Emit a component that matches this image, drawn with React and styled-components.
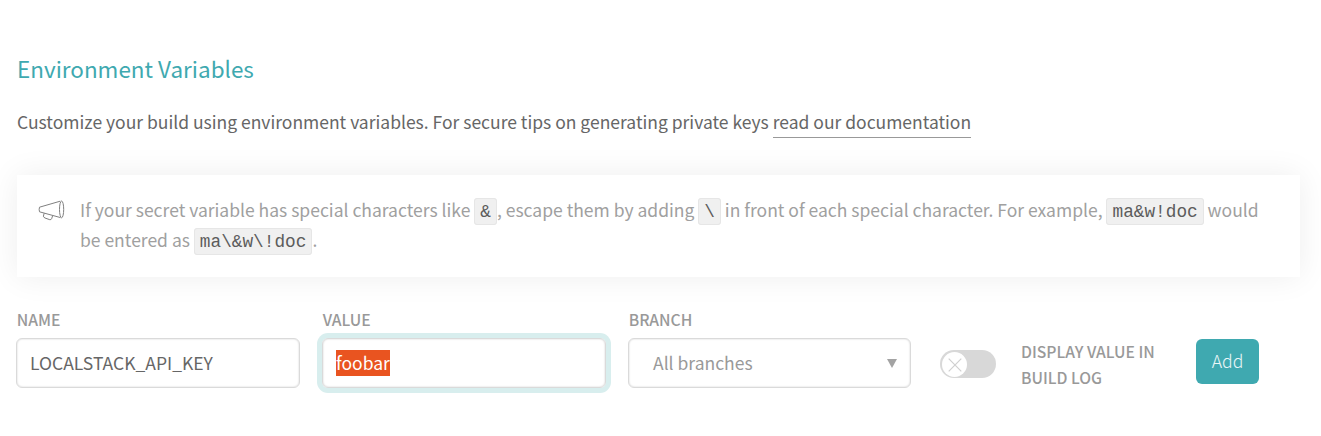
import React from "react";
import styled, { createGlobalStyle, css } from "styled-components";

const GlobalStyle = createGlobalStyle`
  * { box-sizing: border-box; }
  body {
    margin: 0;
    background: #fff;
    color: #666;
    font-family: "Noto Sans CJK SC", "Noto Sans", sans-serif;
    overflow: hidden;
  }
`;

const Section = styled.section`
  width: 1321px;
  height: 436px;
  padding: 48px 21px 0 17px;
`;

const Title = styled.h2`
  margin: 0;
  color: #3fa9b0;
  font-size: 22.48px;
  font-weight: 400;
  line-height: 40px;
`;

const Intro = styled.p`
  margin: 19px 0 0;
  font-size: 17.49px;
  line-height: 30px;
  white-space: nowrap;
`;

const DocLink = styled.a`
  display: inline-block;
  height: 31px;
  border-bottom: 1px solid #999;
  color: inherit;
  text-decoration: none;
`;

const Notice = styled.div`
  display: flex;
  width: 1283px;
  height: 102px;
  margin-top: 37px;
  padding: 20px 0 0 21px;
  background: #fff;
  box-shadow: 0 0 30px rgba(0, 0, 0, 0.07);
`;

const NoticeIcon = styled.svg`
  flex: none;
  width: 28px;
  height: 24px;
  margin-top: 4px;
  fill: none;
  stroke: #808080;
  stroke-width: 1;
  stroke-linejoin: round;
`;

const NoticeText = styled.p`
  margin: 0 0 0 14px;
  color: #a0a0a0;
  font-size: 17.51px;
  line-height: 30px;
  white-space: nowrap;
`;

const Code = styled.code`
  padding: 3px 5px 2px;
  border: 1px solid #e6e6e6;
  border-radius: 3px;
  background: #f0f0f0;
  color: #5c5c5c;
  font: 17.75px/20px "Liberation Mono", monospace;
`;

const Form = styled.form`
  display: flex;
  align-items: flex-start;
  margin: 30px 0 0 -1px;
`;

const Field = styled.div`
  width: 284px;
  margin-right: 22px;
`;

const labelText = css`
  color: #999;
  font-size: 15.7px;
  font-weight: 500;
  line-height: 26px;
`;

const Label = styled.div`
  ${labelText}
  height: 31px;
  padding-left: 0.7px;
`;

const Control = styled.div`
  display: flex;
  align-items: center;
  height: 50px;
  padding: 0 13px;
  border: 1px solid #dadada;
  border-radius: 6px;
  font-size: 17.5px;
  line-height: 26px;
  box-shadow: inset 0 0 2px rgba(0, 0, 0, 0.2)
    ${(p) => (p.$focused ? ", 0 0 0 5px #d8eeee" : "")};
`;

const Selection = styled.span`
  background: #e95420;
  color: #fff;
`;

const Select = styled(Control)`
  width: 283px;
  justify-content: space-between;
  padding: 0 13px 0 24px;
  color: #999;
`;

const Arrow = styled.span`
  width: 0;
  height: 0;
  border: 5px solid transparent;
  border-top: 9px solid #a3a3a3;
  border-bottom: 0;
`;

const Toggle = styled.div`
  display: flex;
  width: 56px;
  height: 28px;
  margin: 43px 25px 0 6px;
  padding: 2px;
  border-radius: 14px;
  background: #d8d8d8;
`;

const Knob = styled.div`
  display: flex;
  align-items: center;
  justify-content: center;
  width: 25px;
  height: 25px;
  border-radius: 50%;
  background: #fff;
`;

const ToggleLabel = styled.div`
  ${labelText}
  width: 150px;
  margin-top: 32px;
  white-space: nowrap;
`;

const AddButton = styled.button`
  width: 63px;
  height: 45px;
  margin: 32px 0 0 25px;
  padding: 0 0 1px;
  border: 0;
  border-radius: 6px;
  background: #3fa9b0;
  color: #eaf6f7;
  font: 300 17.6px/44px "Noto Sans CJK SC", sans-serif;
`;

export default function App() {
  return (
    <>
      <GlobalStyle />
      <Section>
        <Title>Environment Variables</Title>
        <Intro>
          Customize your build using environment variables. For secure tips on
          generating private keys <DocLink>read our documentation</DocLink>
        </Intro>
        <Notice>
          <NoticeIcon viewBox="0 0 28 24">
            <path d="M1.5 8.2 22.2 2.2 M1.5 12.8 22.5 18.6 M1.5 8.2Q.8 10.5 1.5 12.8" />
            <ellipse cx="23.6" cy="10.4" rx="2.1" ry="8.4" />
            <path d="M6.2 14.2 5.4 17.2Q5.4 18.2 7 19L11.8 20.7Q13.2 20.9 13.6 19.8L14.7 16.6" />
          </NoticeIcon>
          <NoticeText>
            If your secret variable has special characters like{" "}
            <Code>&amp;</Code>, escape them by adding <Code>\</Code> in front of
            each special character. For example, <Code>ma&amp;w!doc</Code> would
            <br />
            be entered as <Code>ma\&amp;w\!doc</Code>.
          </NoticeText>
        </Notice>
        <Form>
          <Field>
            <Label>NAME</Label>
            <Control>LOCALSTACK_API_KEY</Control>
          </Field>
          <Field>
            <Label>VALUE</Label>
            <Control $focused>
              <Selection>foobar</Selection>
            </Control>
          </Field>
          <Field>
            <Label>BRANCH</Label>
            <Select>
              All branches
              <Arrow />
            </Select>
          </Field>
          <Toggle>
            <Knob>
              <svg width="14" height="14" viewBox="0 0 14 14">
                <path d="M.7.7 13.3 13.3M13.3.7.7 13.3" stroke="#d0d0d0" strokeWidth="1.2" />
              </svg>
            </Knob>
          </Toggle>
          <ToggleLabel>
            DISPLAY VALUE IN
            <br />
            BUILD LOG
          </ToggleLabel>
          <AddButton type="button">Add</AddButton>
        </Form>
      </Section>
    </>
  );
}
